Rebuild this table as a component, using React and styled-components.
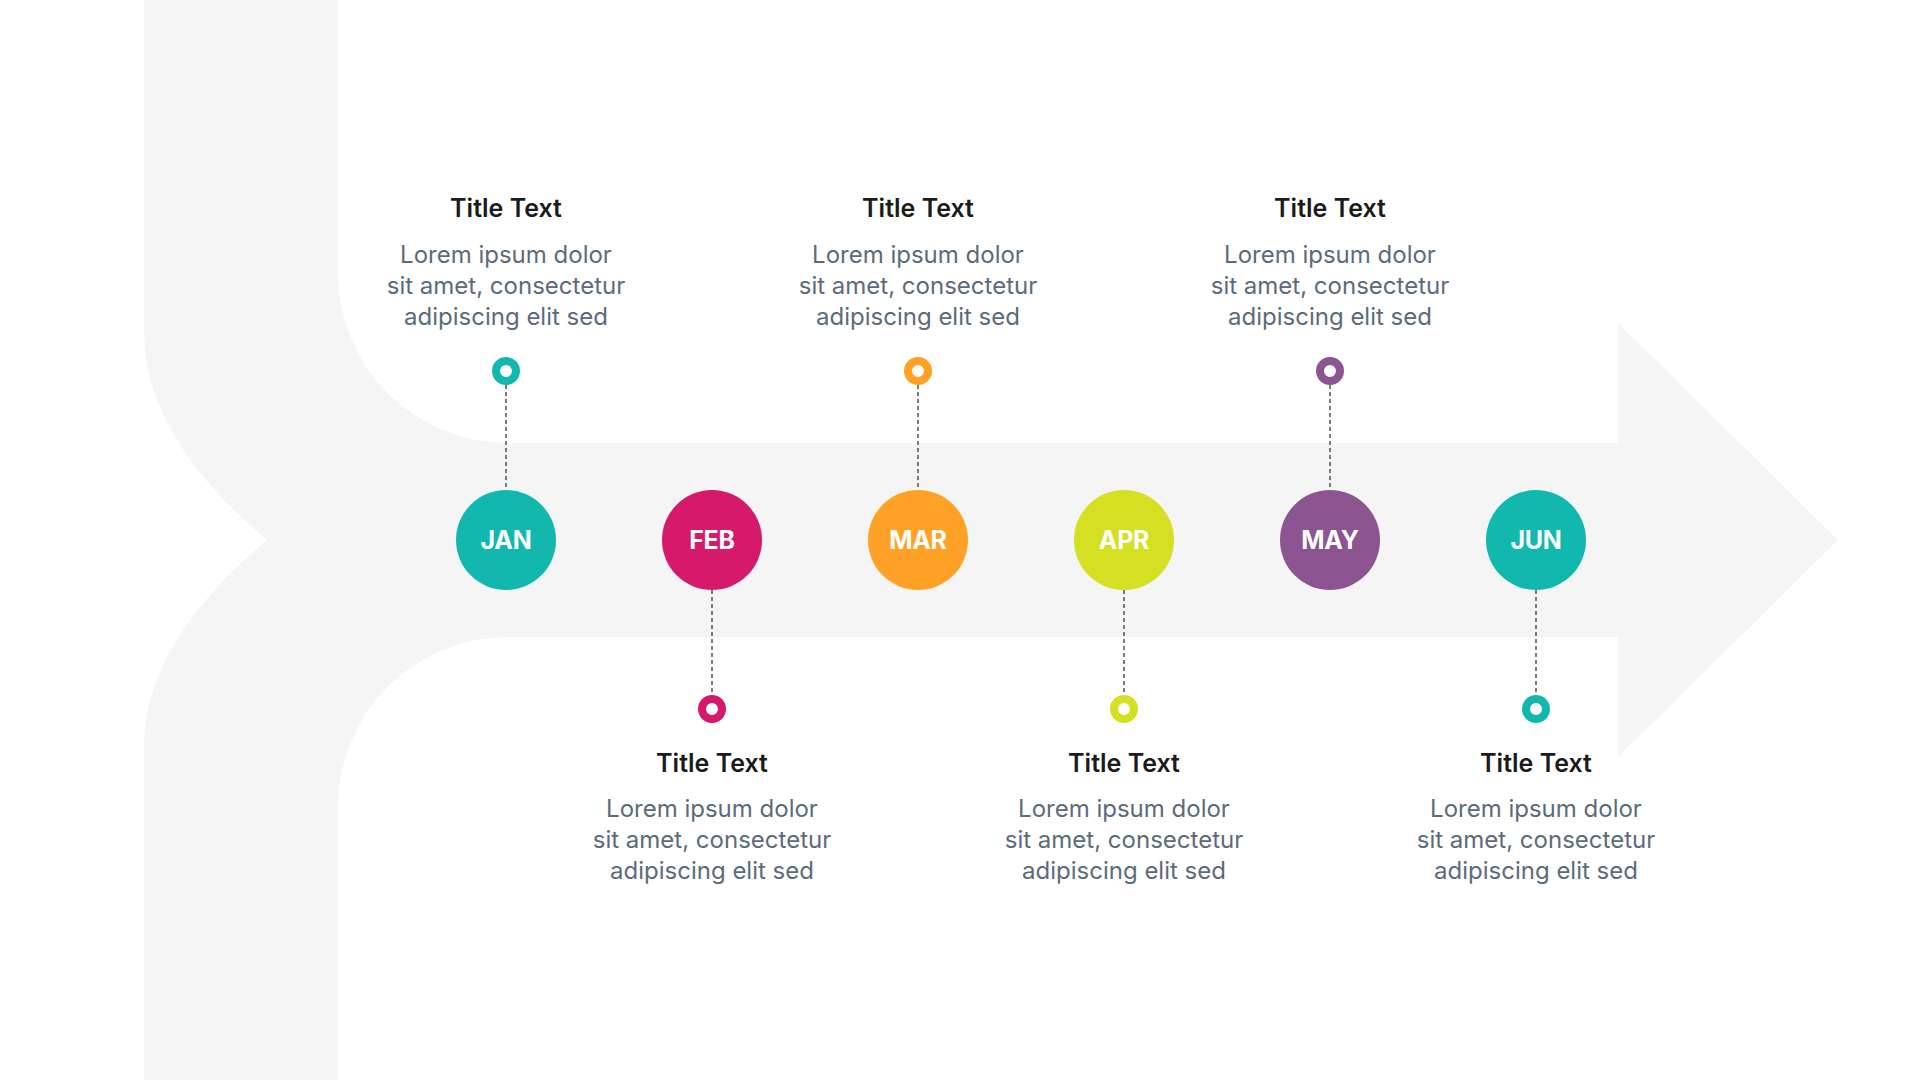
import React from "react";
import styled, { createGlobalStyle } from "styled-components";

const GlobalStyle = createGlobalStyle`
  html, body {
    margin: 0;
    padding: 0;
    background: #ffffff;
  }
  * {
    box-sizing: border-box;
  }
`;

const Slide = styled.div`
  position: relative;
  width: 1920px;
  height: 1080px;
  overflow: hidden;
  background: #ffffff;
  font-family: "Inter", "Noto Sans", sans-serif;
`;

// the big pale arrow drawn behind the timeline
const Backdrop = styled.svg`
  position: absolute;
  inset: 0;
  width: 100%;
  height: 100%;
  z-index: 0;
`;

const Timeline = styled.div`
  position: relative;
  z-index: 1;
  height: 100%;
  display: grid;
  grid-template-columns: repeat(6, 206px);
  align-content: center;
  padding-left: 403px;
`;

const Column = styled.div`
  display: flex;
  flex-direction: column;
  align-items: center;
`;

const Slot = styled.div`
  height: 340px;
  display: flex;
  flex-direction: column;
  align-items: center;
  justify-content: ${(p) => (p.$top ? "flex-end" : "flex-start")};
`;

const Title = styled.div`
  font-size: 25px;
  line-height: 31px;
  font-weight: 600;
  color: #1b1b1b;
  white-space: nowrap;
  margin-bottom: ${(p) => (p.$top ? "15px" : "14px")};
  margin-top: ${(p) => (p.$top ? "0" : "25px")};
`;

const Body = styled.div`
  font-size: 24px;
  line-height: 31px;
  font-weight: 400;
  color: #5b6b7c;
  text-align: center;
  white-space: nowrap;
  margin-bottom: ${(p) => (p.$top ? "25px" : "0")};
`;

const Dot = styled.div`
  width: 28px;
  height: 28px;
  flex-shrink: 0;
  border-radius: 50%;
  border: 8px solid ${(p) => p.$color};
  background: #ffffff;
`;

const Stem = styled.div`
  width: 2px;
  height: 105px;
  flex-shrink: 0;
  background: repeating-linear-gradient(
    to bottom,
    #7b7b7b 0 4px,
    transparent 4px 7px
  );
`;

const Month = styled.div`
  width: 100px;
  height: 100px;
  flex-shrink: 0;
  border-radius: 50%;
  background: ${(p) => p.$color};
  color: #ffffff;
  display: flex;
  align-items: center;
  justify-content: center;
  font-size: 25px;
  font-weight: 700;
  letter-spacing: -0.3px;
`;

const months = [
  { label: "JAN", color: "#12b8ae" },
  { label: "FEB", color: "#d51a6b" },
  { label: "MAR", color: "#ffa126" },
  { label: "APR", color: "#d4e021" },
  { label: "MAY", color: "#8c5490" },
  { label: "JUN", color: "#12b8ae" },
];

function Note({ top }) {
  return (
    <>
      <Title $top={top}>Title Text</Title>
      <Body $top={top}>
        Lorem ipsum dolor
        <br />
        sit amet, consectetur
        <br />
        adipiscing elit sed
      </Body>
    </>
  );
}

function Step({ label, color, up }) {
  return (
    <Column>
      <Slot $top>
        {up && (
          <>
            <Note top />
            <Dot $color={color} />
            <Stem />
          </>
        )}
      </Slot>
      <Month $color={color}>{label}</Month>
      <Slot>
        {!up && (
          <>
            <Stem />
            <Dot $color={color} />
            <Note />
          </>
        )}
      </Slot>
    </Column>
  );
}

export default function App() {
  return (
    <>
      <GlobalStyle />
      <Slide>
        <Backdrop viewBox="0 0 1920 1080" preserveAspectRatio="none">
          <path
            fill="#f5f5f5"
            d="M144 0 H338 V273 A170 170 0 0 0 508 443 H1618 V323 L1838 540 L1618 757 V637 H508 A170 170 0 0 0 338 807 V1080 H144 V750 C144 660 208 590 267 540 C208 490 144 420 144 330 Z"
          />
        </Backdrop>
        <Timeline>
          {months.map((m, i) => (
            <Step key={m.label} label={m.label} color={m.color} up={i % 2 === 0} />
          ))}
        </Timeline>
      </Slide>
    </>
  );
}
